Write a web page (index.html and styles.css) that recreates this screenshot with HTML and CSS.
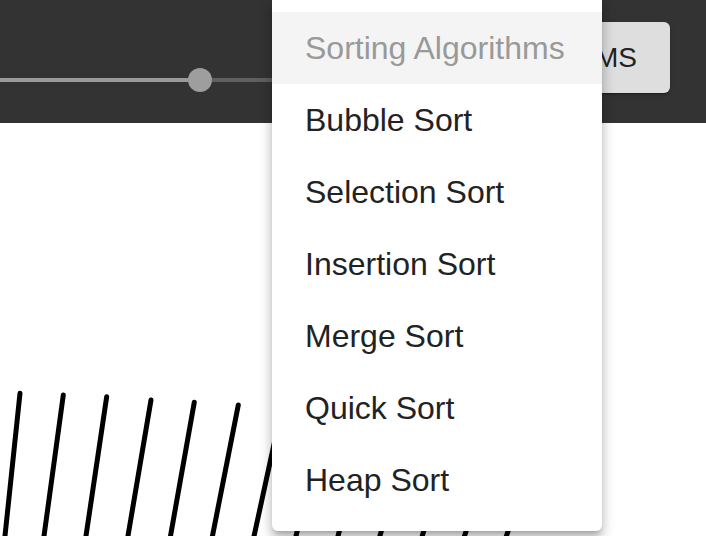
FILE: index.html
```html
<!DOCTYPE html>
<html>
<head>
<meta charset="utf-8">
<link rel="stylesheet" href="styles.css">
</head>
<body>
<header class="toolbar">
  <div class="slider">
    <div class="track-filled"></div>
    <div class="thumb"></div>
    <div class="track-rest"></div>
  </div>
  <button class="algo-btn">ALGORITHMS</button>
</header>
<main class="canvas">
  <svg class="bars" viewBox="0 123 706 413" width="706" height="413">
    <g stroke="#000" stroke-width="5" stroke-linecap="round">
      <line x1="20" y1="393.3" x2="3.5" y2="550"/>
      <line x1="63.3" y1="395" x2="42.1" y2="550"/>
      <line x1="106.7" y1="396.7" x2="83.9" y2="550"/>
      <line x1="151" y1="400" x2="125.6" y2="550"/>
      <line x1="194.3" y1="402.3" x2="168" y2="550"/>
      <line x1="238.3" y1="405" x2="209.7" y2="550"/>
      <line x1="282" y1="407.5" x2="251" y2="550"/>
      <line x1="326" y1="410" x2="292.7" y2="550"/>
      <line x1="370" y1="412.5" x2="334.4" y2="550"/>
      <line x1="414" y1="415" x2="376" y2="550"/>
      <line x1="458" y1="417.5" x2="418" y2="550"/>
      <line x1="502" y1="420" x2="460" y2="550"/>
      <line x1="546" y1="422.5" x2="501.5" y2="550"/>
    </g>
  </svg>
</main>
<ul class="menu">
  <li class="menu-header">Sorting Algorithms</li>
  <li class="menu-item">Bubble Sort</li>
  <li class="menu-item">Selection Sort</li>
  <li class="menu-item">Insertion Sort</li>
  <li class="menu-item">Merge Sort</li>
  <li class="menu-item">Quick Sort</li>
  <li class="menu-item">Heap Sort</li>
</ul>
</body>
</html>
```
FILE: styles.css
```css
html, body {
  margin: 0;
  padding: 0;
  width: 706px;
  height: 536px;
  overflow: hidden;
  background: #fff;
  font-family: "Liberation Sans", Arial, sans-serif;
}

.toolbar {
  height: 123px;
  background: #333333;
  display: flex;
  align-items: flex-start;
  box-sizing: border-box;
}

.slider {
  display: flex;
  align-items: center;
  margin-top: 68px;
  height: 24px;
  width: 400px;
}

.track-filled {
  width: 188px;
  height: 4px;
  background: #9a9a9a;
}

.thumb {
  width: 24px;
  height: 24px;
  border-radius: 50%;
  background: #9e9e9e;
  flex: none;
}

.track-rest {
  flex: 1;
  height: 4px;
  background: #5f5f5f;
}

.algo-btn {
  margin-top: 22px;
  margin-left: auto;
  margin-right: 36px;
  height: 71px;
  padding: 0 33px;
  border: none;
  border-radius: 6px;
  background: #dedede;
  color: #222;
  font-family: "Liberation Sans", Arial, sans-serif;
  font-size: 28px;
  box-shadow: 0 3px 1px -2px rgba(0,0,0,.2), 0 2px 2px 0 rgba(0,0,0,.14), 0 1px 5px 0 rgba(0,0,0,.12);
}

.canvas {
  height: 413px;
}

.bars {
  display: block;
}

.menu {
  position: absolute;
  left: 272px;
  top: 0;
  width: 330px;
  margin: 0;
  padding: 12px 0 15px;
  list-style: none;
  background: #fff;
  border-radius: 0 0 6px 6px;
  box-shadow: 0 5px 5px -3px rgba(0,0,0,.2), 0 8px 10px 1px rgba(0,0,0,.14), 0 3px 14px 2px rgba(0,0,0,.12);
}

.menu li {
  height: 72px;
  display: flex;
  align-items: center;
  padding-left: 33px;
  font-size: 32px;
}

.menu-header {
  background: #f4f4f4;
  color: #999999;
}

.menu-item {
  color: #222222;
}
```
